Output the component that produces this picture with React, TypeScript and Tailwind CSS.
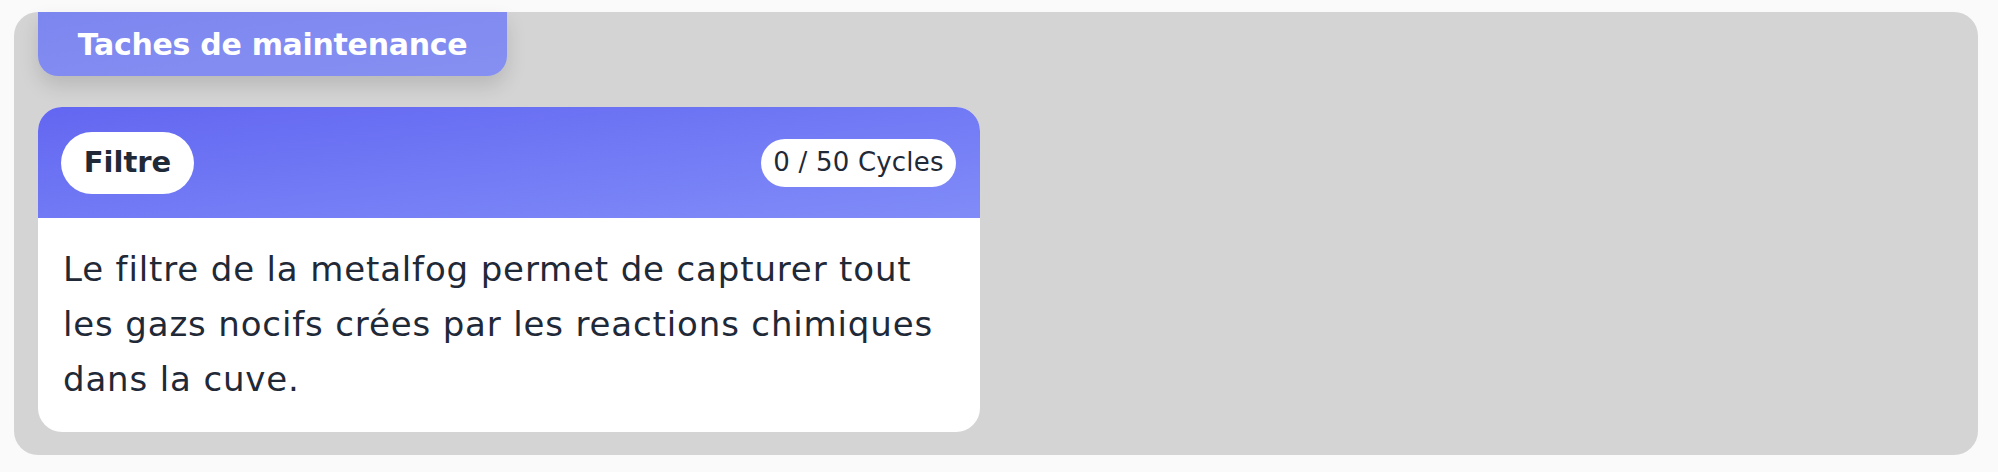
export default function App() {
  return (
    <div className="min-h-[472px] w-full bg-[#fafafa] pt-[12px] pl-[14px] pr-[20px] pb-[17px] font-['DejaVu_Sans',sans-serif]">
      <section className="flex h-[443px] flex-col items-start rounded-[24px] bg-[#d4d4d4] px-[24px]">
        <div className="flex h-[64px] w-[469px] items-center justify-center rounded-b-[20px] bg-gradient-to-br from-[#7c86ef] to-[#8690f2] text-[30px] font-bold tracking-[-0.3px] text-white shadow-[0_10px_20px_rgba(0,0,0,0.13)]">
          Taches de maintenance
        </div>
        <article className="mt-[31px] w-[942px] overflow-hidden rounded-[24px] bg-white">
          <header className="flex h-[111px] items-center justify-between bg-gradient-to-br from-[#6366f1] to-[#818cf8] pl-[23px] pr-[24px]">
            <span className="flex h-[62px] w-[133px] items-center justify-center rounded-full bg-white text-[29px] font-bold text-[#1f2937]">
              Filtre
            </span>
            <span className="flex h-[48px] w-[195px] items-center justify-center rounded-full bg-white text-[26px] tracking-[0.2px] text-[#1f2937]">
              0 / 50 Cycles
            </span>
          </header>
          <p className="h-[214px] pl-[25px] pr-[20px] pt-[24px] text-[34px] leading-[55px] tracking-[0.85px] text-[#1f2937]">
            Le filtre de la metalfog permet de capturer tout les gazs nocifs crées par les reactions chimiques dans la cuve.
          </p>
        </article>
      </section>
    </div>
  );
}
